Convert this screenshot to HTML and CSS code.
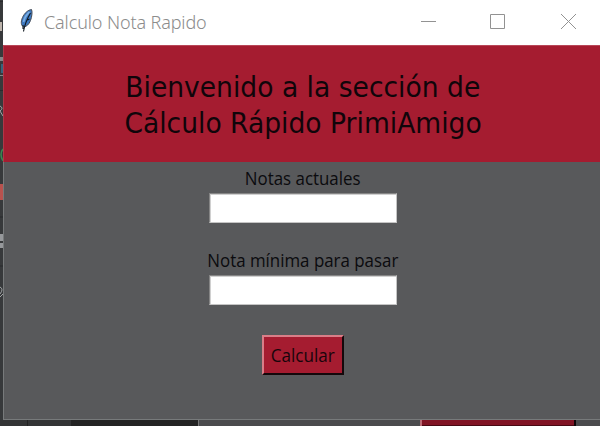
FILE: index.html
```html
<!DOCTYPE html>
<html lang="es">
<head>
<meta charset="utf-8">
<title>Calculo Nota Rapido</title>
<link rel="stylesheet" href="styles.css">
</head>
<body>
<div class="desktop">
  <svg class="backdrop" width="600" height="426" aria-hidden="true">
    <rect width="3" height="426" fill="#37393b"/>
    <path d="M0 1.5h3M0 90.5h3M0 217h3M0 266h3" stroke="#292b2d"/>
    <path d="M0 22h2v9H0z" fill="#bdb4ac"/>
    <path d="M0 57h3v4H0zM0 75h3v1H0z" fill="#85878a"/>
    <path d="M1 64h2v9H1z" fill="#36647e"/>
    <path d="M0 106q4 2 0 5l3 5" fill="none" stroke="#a0a3a5"/>
    <path d="M3 149q-4 5 0 12" fill="none" stroke="#388a50" stroke-width="1.5"/>
    <path d="M0 184h3v16H0z" fill="#b8524e"/>
    <path d="M0 234h3v7H0zM0 243h3v5H0z" fill="#96989b"/>
    <path d="M0 287q4 2 0 7M0 297l3-3" fill="none" stroke="#a0a3a5"/>
    <path d="M0 420h72v6H0z" fill="#333435"/>
    <path d="M27 420h1v6h-1z" fill="#222"/>
    <path d="M71 420h127v6H71z" fill="#232323"/>
    <path d="M198 420h402v6H198z" fill="#4b4b4d"/>
    <path d="M198 420h1v6h-1z" fill="#777"/>
    <path d="M420 420h155v6H420z" fill="#811424"/>
    <path d="M420 420h2v6h-2z" fill="#b96a74"/>
    <path d="M574 420h2v6h-2z" fill="#100508"/>
    <path d="M422 425.5h152" stroke="#4a0913"/>
  </svg>
  <main class="window">
    <header class="titlebar">
      <svg class="feather" width="16" height="26" viewBox="0 0 16 26" aria-hidden="true">
        <path d="M12.5 1.5c1 2 .5 7-1 11-1.500 4-4 6-6.500 6.500C2 18 1.500 14 3.500 9.500 5.500 5 9 2 12.500 1.500z" fill="#3d79c1" stroke="#454b55" stroke-width="1"/>
        <path d="M10.500 4C8 6 5.500 9.500 4.500 14" fill="none" stroke="#78ace2" stroke-width="1.800"/>
        <path d="M11.500 5C8.500 10 6 15 4.500 23.500M4 17v4M8.500 12l2-1" fill="none" stroke="#101820" stroke-width="1.100"/>
      </svg>
      <span class="caption">Calculo Nota Rapido</span>
      <svg class="controls" width="160" height="20" viewBox="0 0 160 20" fill="none" stroke="#929292" aria-hidden="true">
        <path d="M1 9.500h15M70.500 2.500h14v14h-14z"/>
        <path d="M141 2l15 15M156 2l-15 15"/>
      </svg>
    </header>
    <section class="banner">
      <h1><span class="line">Bienvenido a la sección de</span><span class="line">Cálculo Rápido PrimiAmigo</span></h1>
    </section>
    <form class="form">
      <label class="label" for="notas">Notas actuales</label>
      <input class="entry" id="notas" type="text">
      <label class="label minimum" for="minima">Nota mínima para pasar</label>
      <input class="entry" id="minima" type="text">
      <button class="calculate" type="button"><span class="action">Calcular</span></button>
    </form>
  </main>
</div>
</body>
</html>
```
FILE: styles.css
```css
* { box-sizing: border-box; }
body { margin: 0; font-family: "Open Sans", "Noto Sans", sans-serif; }
.desktop { position: relative; width: 600px; height: 426px; overflow: hidden; padding-left: 3px; background: #37393b; }
.backdrop { position: absolute; left: 0; top: 0; }
.window { position: relative; width: 597px; height: 420px; background: #58595b; border-bottom: 1px solid #777a7b; display: flex; flex-direction: column; }
.titlebar { height: 45px; flex: none; background: #fff; display: flex; align-items: center; padding: 0 20px 0 16px; }
.feather { flex: none; margin-top: -3px; }
.caption { font-family: "Noto Sans", sans-serif; font-size: 18px; font-weight: 300; color: #8c8c8c; margin-left: 9px; margin-top: -2px; white-space: nowrap; letter-spacing: -.12px; }
.controls { margin-left: auto; margin-top: -1px; }
.banner { height: 117px; flex: none; background: #a51c30; border-top: 1px solid #b84758; border-left: 1px solid #b03748; display: flex; justify-content: center; padding-top: 23px; }
h1 { margin: 0; width: 400px; font: 400 29px/36px "DejaVu Sans", sans-serif; color: #10050a; display: flex; flex-direction: column; align-items: center; padding-left: 2px; }
.line { white-space: nowrap; transform: scaleX(.916); }
.form { flex: 1; border-left: 1px solid #777a7b; display: flex; flex-direction: column; align-items: center; padding-top: 4px; padding-left: 2px; }
.label { font-size: 18px; line-height: 24px; color: #0b0b0e; white-space: nowrap; margin-bottom: 3px; transform: scaleX(.938); }
.entry { width: 188px; height: 30px; border: 1px solid; border-color: #858585 #c5c5c5 #c5c5c5 #858585; box-shadow: inset 1px 1px #d0d0d0; background: #fff; margin: 0; padding: 0; }
.minimum { margin-top: 25px; }
.calculate { width: 82px; height: 40px; margin-top: 30px; border: 2px solid; border-color: #d97e88 #14080b #14080b #d97e88; background: #a51c30; color: #18050b; font: 18px/24px "Open Sans", sans-serif; padding: 0 0 1px; white-space: nowrap; }
.action { display: inline-block; transform: scaleX(.95); }
```
